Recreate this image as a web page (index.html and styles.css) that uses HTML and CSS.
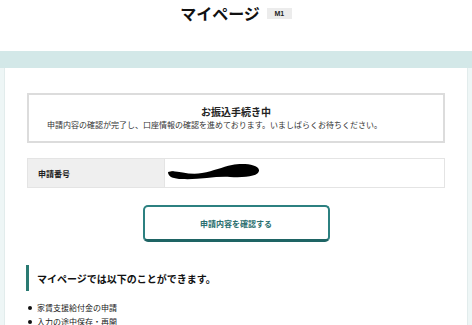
FILE: index.html
```html
<!DOCTYPE html>
<html lang="ja">
<head>
    <meta charset="UTF-8">
    <meta name="viewport" content="width=device-width, initial-scale=1.0">
    <title>マイページ</title>
    <link rel="stylesheet" href="styles.css">
</head>
<body>
    <header class="page-header">
        <h1>マイページ</h1>
        <span class="badge">M1</span>
    </header>

    <div class="band"></div>

    <main class="card">
        <section class="notice">
            <h2>お振込手続き中</h2>
            <p>申請内容の確認が完了し、口座情報の確認を進めております。いましばらくお待ちください。</p>
        </section>

        <div class="info-row">
            <div class="info-label">申請番号</div>
            <div class="info-value">
                <span class="num">6</span>
                <svg class="redact" width="92" height="16" viewBox="0 0 92 16">
                    <path d="M0 8 C8 5 20 12 34 9 C46 7 54 3 64 1 C74 -1 90 0 91 6 C92 12 78 14 62 13 C48 12 30 16 14 15 C6 15 0 13 0 8 Z" fill="#000"/>
                </svg>
            </div>
        </div>

        <div class="actions">
            <button class="btn-outline">申請内容を確認する</button>
        </div>

        <h3 class="section-title">マイページでは以下のことができます。</h3>
        <ul class="feature-list">
            <li>家賃支援給付金の申請</li>
            <li>入力の途中保存・再開</li>
        </ul>
    </main>
</body>
</html>
```

FILE: styles.css
```css
/* Global */
body {
    margin: 0;
    background: #eef6f6;
    font-family: "Noto Sans CJK JP", "Noto Sans", sans-serif;
    color: #222;
}

/* Header */
.page-header {
    height: 51px;
    background: #fff;
    display: flex;
    justify-content: center;
    align-items: flex-start;
    gap: 7px;
    padding-top: 3px;
    box-sizing: border-box;
}

.page-header h1 {
    margin: 0;
    font-size: 16px;
    line-height: 20px;
    font-weight: bold;
    color: #111;
}

.badge {
    margin-top: 5px;
    width: 25px;
    height: 11px;
    background: #ececec;
    font-family: "Liberation Sans", Arial, sans-serif;
    font-size: 7px;
    font-weight: bold;
    line-height: 11px;
    text-align: center;
    color: #222;
}

.band {
    height: 17px;
    background: #d3e8e8;
}

/* Card */
.card {
    margin: 0 4px;
    background: #fff;
    border: 1px solid #e2ecec;
    border-top: none;
    padding: 25px 22px 0 22px;
    min-height: 300px;
}

/* Notice box */
.notice {
    border: 2px solid #dcdcdc;
    padding: 10px 18px;
}

.notice h2 {
    margin: 0;
    font-size: 10px;
    line-height: 14px;
    font-weight: bold;
    text-align: center;
    color: #222;
}

.notice p {
    margin: 0;
    font-size: 8px;
    line-height: 12px;
    color: #333;
}

/* Application number row */
.info-row {
    margin-top: 15px;
    display: flex;
    height: 30px;
    border: 1px solid #e4e4e4;
    box-sizing: border-box;
}

.info-label {
    width: 137px;
    background: #efefef;
    border-right: 1px solid #e4e4e4;
    font-size: 8px;
    font-weight: bold;
    padding-left: 10px;
    display: flex;
    align-items: center;
    box-sizing: border-box;
}

.info-value {
    flex: 1;
    display: flex;
    align-items: center;
    padding-left: 5px;
}

.num {
    font-size: 8px;
    margin-right: -6px;
}

.redact {
    display: block;
    margin-top: -2px;
}

/* Button */
.actions {
    margin-top: 17px;
    display: flex;
    justify-content: center;
}

.btn-outline {
    width: 187px;
    height: 37px;
    background: #fff;
    border: 2px solid #2c8080;
    border-bottom: 3px solid #1e6464;
    border-radius: 5px;
    font-family: "Noto Sans CJK JP", sans-serif;
    font-size: 8px;
    font-weight: bold;
    color: #2a6f6f;
    cursor: pointer;
}

/* Section heading */
.section-title {
    margin: 23px 0 0 0;
    border-left: 3px solid #2a7a72;
    padding-left: 8px;
    margin-left: -1px;
    height: 26px;
    display: flex;
    align-items: center;
    font-size: 10px;
    font-weight: bold;
    color: #111;
}

.feature-list {
    list-style: none;
    margin: 10px 0 0 0;
    padding: 0;
}

.feature-list li {
    position: relative;
    padding-left: 10px;
    font-size: 8px;
    line-height: 14px;
    color: #222;
}

.feature-list li::before {
    content: "";
    position: absolute;
    left: 1px;
    top: 5px;
    width: 4px;
    height: 4px;
    border-radius: 50%;
    background: #111;
}
```
